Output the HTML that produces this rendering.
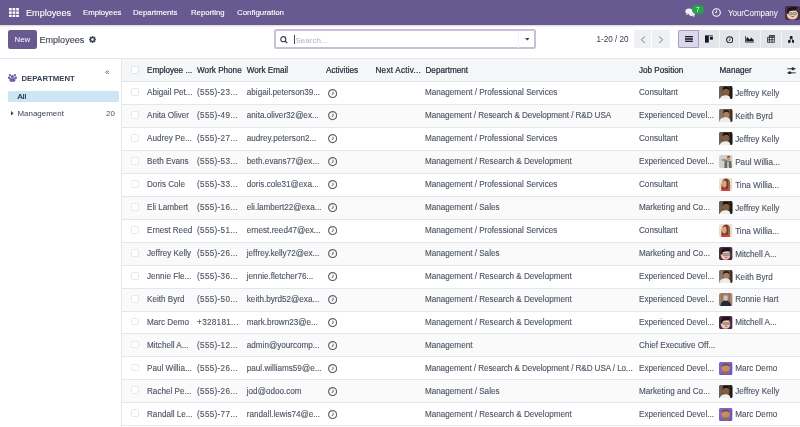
<!DOCTYPE html>
<html><head><meta charset="utf-8"><style>
*{box-sizing:border-box;margin:0;padding:0}
html,body{width:800px;height:427px;overflow:hidden;background:#fff;font-family:"Liberation Sans",sans-serif}
.t{position:absolute;white-space:nowrap}
.rt{-webkit-text-stroke:0.12px #4b5563}
.a{position:absolute}
</style></head><body><div id="wrap" style="position:absolute;left:0;top:0;width:800px;height:427px;overflow:hidden;background:#fff;will-change:transform">
<div class="a" style="left:0;top:0;width:800px;height:25px;background:#675a91"></div><div class="a" style="left:0;top:25px;width:800px;height:2px;background:linear-gradient(rgba(40,40,60,0.2),rgba(40,40,60,0))"></div><svg class="a" style="left:9.2px;top:7.9px" width="10" height="9.4" viewBox="0 0 10 9.4"><g fill="#fff"><rect x="0.0" y="0.0" width="2.7" height="2.5"/><rect x="3.6" y="0.0" width="2.7" height="2.5"/><rect x="7.2" y="0.0" width="2.7" height="2.5"/><rect x="0.0" y="3.4" width="2.7" height="2.5"/><rect x="3.6" y="3.4" width="2.7" height="2.5"/><rect x="7.2" y="3.4" width="2.7" height="2.5"/><rect x="0.0" y="6.8" width="2.7" height="2.5"/><rect x="3.6" y="6.8" width="2.7" height="2.5"/><rect x="7.2" y="6.8" width="2.7" height="2.5"/></g></svg><div class="t " style="left:26px;top:8.90px;font-size:9.1px;line-height:9.1px;color:#fff;font-weight:normal;-webkit-text-stroke:0.1px #fff;">Employees</div>
<div class="t " style="left:83px;top:8.88px;font-size:7.75px;line-height:7.75px;color:#fff;font-weight:normal;-webkit-text-stroke:0.12px #fff;">Employees</div>
<div class="t " style="left:133px;top:8.88px;font-size:7.75px;line-height:7.75px;color:#fff;font-weight:normal;-webkit-text-stroke:0.12px #fff;">Departments</div>
<div class="t " style="left:191px;top:8.88px;font-size:7.75px;line-height:7.75px;color:#fff;font-weight:normal;-webkit-text-stroke:0.12px #fff;">Reporting</div>
<div class="t " style="left:237px;top:8.80px;font-size:7.9px;line-height:7.9px;color:#fff;font-weight:normal;-webkit-text-stroke:0.12px #fff;">Configuration</div>
<svg class="a" style="left:684.8px;top:8px" width="11" height="9.2" viewBox="0 0 11 9.2">
<ellipse cx="7" cy="5.9" rx="3.1" ry="2.1" fill="#e6e3ee"/><path d="M8.6 7.4 L10.2 9 L6.8 7.9Z" fill="#e6e3ee"/>
<ellipse cx="4" cy="3.3" rx="3.6" ry="2.7" fill="#f3f1f7"/><path d="M1.6 5.2 L1 7 L3.6 5.9Z" fill="#f3f1f7"/></svg><div class="a" style="left:691.9px;top:5.3px;width:12px;height:8.8px;border-radius:4.4px;background:#22a447"></div><div class="t " style="left:696px;top:6.65px;font-size:6.4px;line-height:6.4px;color:#fff;font-weight:normal;">7</div>
<svg class="a" style="left:711.5px;top:8.2px" width="9" height="9" viewBox="0 0 9 9"><circle cx="4.5" cy="4.5" r="3.8" fill="none" stroke="#fff" stroke-width="1.1"/><path d="M4.5 2.3V4.6H3" fill="none" stroke="#fff" stroke-width="0.9"/></svg><div class="t " style="left:728px;top:9.98px;font-size:8.15px;line-height:8.15px;color:#fff;font-weight:normal;letter-spacing:-0.15px">YourCompany</div>
<svg class="a" style="left:785.1px;top:5.5px" width="15" height="14" viewBox="0 0 15 14"><rect width="15" height="14" rx="2" fill="#4b2b46"/>
<path d="M1.8 8.5 Q1.8 4.2 7.4 4.1 Q13 4.2 13 8.6 Q12.6 13.6 7.4 13.6 Q2.2 13.6 1.8 8.5Z" fill="#f2cbb2"/>
<path d="M2 7.6 Q1.6 2 5.6 1.2 Q9.5 0.4 12.2 1.4 Q12 3.6 9.8 4.4 Q6.5 4.6 4.2 5.2 L3.4 8Z" fill="#1b1418"/>
<rect x="3.6" y="6.6" width="3.5" height="2.2" rx=".6" fill="#b9bcbc" stroke="#555" stroke-width=".5"/><rect x="7.9" y="6.6" width="3.5" height="2.2" rx=".6" fill="#b9bcbc" stroke="#555" stroke-width=".5"/>
<path d="M6.3 10.6 H8.9" stroke="#6a3a3a" stroke-width=".8"/></svg><div class="a" style="left:0;top:58px;width:800px;height:1px;background:#e5e7eb"></div><div class="a" style="left:8.3px;top:30.3px;width:28.6px;height:18.4px;border-radius:2.3px;background:#675a91"></div><div class="t " style="left:14.5px;top:35.85px;font-size:7.8px;line-height:7.8px;color:#fff;font-weight:normal;">New</div>
<div class="t " style="left:39.5px;top:36.03px;font-size:9.05px;line-height:9.05px;color:#3f4551;font-weight:normal;-webkit-text-stroke:0.12px #3f4551;">Employees</div>
<svg class="a" style="left:88.6px;top:36.1px" width="7" height="7" viewBox="-3.5 -3.5 7 7"><g fill="#374151"><rect x="-0.85" y="-3.4" width="1.7" height="1.6" transform="rotate(0)"/><rect x="-0.85" y="-3.4" width="1.7" height="1.6" transform="rotate(45)"/><rect x="-0.85" y="-3.4" width="1.7" height="1.6" transform="rotate(90)"/><rect x="-0.85" y="-3.4" width="1.7" height="1.6" transform="rotate(135)"/><rect x="-0.85" y="-3.4" width="1.7" height="1.6" transform="rotate(180)"/><rect x="-0.85" y="-3.4" width="1.7" height="1.6" transform="rotate(225)"/><rect x="-0.85" y="-3.4" width="1.7" height="1.6" transform="rotate(270)"/><rect x="-0.85" y="-3.4" width="1.7" height="1.6" transform="rotate(315)"/><path fill-rule="evenodd" d="M0 -2.6A2.6 2.6 0 1 1 0 2.6A2.6 2.6 0 1 1 0 -2.6ZM0 -1.35A1.35 1.35 0 1 0 0 1.35A1.35 1.35 0 1 0 0 -1.35Z"/></g></svg><div class="a" style="left:273.5px;top:29.4px;width:262px;height:20px;border:2px solid #c6c1d8;border-radius:2.5px;background:#fff"></div><div class="a" style="left:518px;top:31px;width:1px;height:17px;background:#f1f2f4"></div><svg class="a" style="left:279.6px;top:36.4px" width="8" height="7.4" viewBox="0 0 8 7.4"><circle cx="3.3" cy="3.2" r="2.55" fill="none" stroke="#374151" stroke-width="1.15"/><path d="M5.1 5 L7.3 7.1" stroke="#374151" stroke-width="1.25"/></svg><div class="a" style="left:294.2px;top:35px;width:0.9px;height:9px;background:#444"></div><div class="t " style="left:295.5px;top:36.95px;font-size:8px;line-height:8px;color:#adb5bd;font-weight:normal;">Search...</div>
<svg class="a" style="left:524.6px;top:38.4px" width="4.6" height="2.5" viewBox="0 0 5 2.6"><path d="M0 0H5L2.5 2.6Z" fill="#374151"/></svg><div class="t " style="left:596.5px;top:35.98px;font-size:8.15px;line-height:8.15px;color:#374151;font-weight:normal;">1-20 / 20</div>
<div class="a" style="left:633.5px;top:30px;width:36px;height:18px;border-radius:2px;background:#eef0f3"></div><div class="a" style="left:651px;top:30px;width:0.7px;height:18px;background:#fff"></div><svg class="a" style="left:639.5px;top:35.8px" width="6" height="7.5" viewBox="0 0 6 7.5"><path d="M5 0.5 L1.2 3.75 L5 7" fill="none" stroke="#6b7280" stroke-width="0.9"/></svg><svg class="a" style="left:657.5px;top:35.8px" width="6" height="7.5" viewBox="0 0 6 7.5"><path d="M1 0.5 L4.8 3.75 L1 7" fill="none" stroke="#6b7280" stroke-width="0.9"/></svg><div class="a" style="left:678.3px;top:30px;width:122px;height:18px;background:#e2e5e9"></div><div class="a" style="left:719.1px;top:30px;width:0.8px;height:18px;background:#f3f4f6"></div><div class="a" style="left:739.2px;top:30px;width:0.8px;height:18px;background:#f3f4f6"></div><div class="a" style="left:760.0px;top:30px;width:0.8px;height:18px;background:#f3f4f6"></div><div class="a" style="left:781.0px;top:30px;width:0.8px;height:18px;background:#f3f4f6"></div><div class="a" style="left:678.3px;top:30px;width:21px;height:18px;border:1px solid #a69dca;border-radius:2px 0 0 2px;background:#dcd8ea"></div><svg class="a" style="left:684.9px;top:35.85px" width="7.9" height="6.2" viewBox="0 0 7.9 6.2"><g fill="#111827"><rect y="0" width="7.9" height="1.1"/><rect y="5.1" width="7.9" height="1.1"/><rect y="1.7" width="7.9" height="2.8" fill="#3f434b"/></g></svg><svg class="a" style="left:705.1px;top:35.1px" width="8" height="7.7" viewBox="0 0 8 7.7"><g fill="#111827"><rect x="0" y="0" width="8" height=".75" fill="#555"/><rect x="0" y=".75" width="3.8" height="6.9"/><rect x="4.9" y="1.65" width="3" height="3"/></g></svg><svg class="a" style="left:725.8px;top:35.5px" width="7.4" height="7.4" viewBox="0 0 8 8"><circle cx="4" cy="4" r="3.3" fill="none" stroke="#111827" stroke-width="1.1"/><path d="M4.3 2.4V4.5 L3 5.3" fill="none" stroke="#111827" stroke-width=".8"/></svg><svg class="a" style="left:745px;top:36px" width="9.4" height="6.5" viewBox="0 0 9.4 6.5"><path d="M0.4 0V6.1H9.3" fill="none" stroke="#111827" stroke-width=".8"/><path d="M1.3 5.2V2.5L2.6 1.1 3.8 2.7 5 3.5 6.2 1.5 7.3 2.7 8.6 3.8V5.2Z" fill="#111827"/></svg><svg class="a" style="left:767px;top:35.1px" width="8.2" height="7.7" viewBox="0 0 8.2 7.7"><g fill="none" stroke="#111827" stroke-width=".75"><path d="M2.4 .4H7.8V7.3H.4V2.4H7.8M.4 4.8H7.8M2.4 .4V7.3M5.1 .4V7.3"/></g><rect x="2.4" y=".4" width="5.4" height="2" fill="#111827" opacity=".45"/></svg><svg class="a" style="left:787.8px;top:35.7px" width="6.6" height="6.9" viewBox="0 0 6.6 6.9"><g fill="#111827"><circle cx="3.2" cy="1.35" r="1.4"/><circle cx="1.3" cy="5.5" r="1.4"/><circle cx="5.3" cy="5.5" r="1.4"/><path d="M3.2 1.25 L1.2 5.6 M3.2 1.25 L5.3 5.6" stroke="#111827" stroke-width=".8"/></g></svg><div class="a" style="left:121px;top:58.5px;width:1px;height:369px;background:#e5e7eb"></div><svg class="a" style="left:7px;top:73px" width="11" height="10" viewBox="0 0 11 10"><g fill="#6b5ca5"><circle cx="2.95" cy="2.1" r="1.15"/><circle cx="7.9" cy="2.1" r="1.15"/><circle cx="5.45" cy="3.6" r="1.55"/><rect x="1" y="3.5" width="2.4" height="2.5" rx=".9"/><rect x="7.5" y="3.5" width="2.4" height="2.5" rx=".9"/><rect x="2.5" y="5.3" width="5.9" height="3.4" rx="1.1"/></g></svg><div class="t " style="left:21.5px;top:75.17px;font-size:7.75px;line-height:7.75px;color:#374151;font-weight:bold;">DEPARTMENT</div>
<svg class="a" style="left:104.8px;top:69.6px" width="4.6" height="4.6" viewBox="0 0 4.6 4.6"><path d="M2.4 .5L.6 2.3 2.4 4.1M4.3 .5L2.5 2.3 4.3 4.1" fill="none" stroke="#6b7280" stroke-width=".95"/></svg><div class="a" style="left:8.1px;top:90.5px;width:110.9px;height:11.7px;border-radius:1.5px;background:#cce6f5"></div><div class="t " style="left:17.5px;top:93.40px;font-size:7.9px;line-height:7.9px;color:#111827;font-weight:normal;-webkit-text-stroke:0.18px #111827;">All</div>
<svg class="a" style="left:11.2px;top:111.2px" width="2.6" height="4.4" viewBox="0 0 2.6 4.4"><path d="M0 0L2.6 2.2 0 4.4Z" fill="#374151"/></svg><div class="t " style="left:17.5px;top:109.98px;font-size:7.95px;line-height:7.95px;color:#374151;font-weight:normal;">Management</div>
<div class="t " style="left:106px;top:109.98px;font-size:7.95px;line-height:7.95px;color:#4b5563;font-weight:normal;">20</div>
<div class="a" style="left:122px;top:58.5px;width:678px;height:23.0px;background:#f5f6f8"></div><div class="a" style="left:122px;top:81.0px;width:678px;height:1px;background:#e3e5e8"></div><div class="a" style="left:130.9px;top:66px;width:7.9px;height:7.9px;border:1px solid #e2e4e8;border-radius:1.6px;background:#fff"></div><div class="t " style="left:147px;top:66.97px;font-size:8.15px;line-height:8.15px;color:#1f2937;font-weight:normal;-webkit-text-stroke:0.22px #1f2937;">Employee ...</div>
<div class="t " style="left:197.1px;top:66.97px;font-size:8.15px;line-height:8.15px;color:#1f2937;font-weight:normal;-webkit-text-stroke:0.22px #1f2937;">Work Phone</div>
<div class="t " style="left:246.8px;top:66.97px;font-size:8.15px;line-height:8.15px;color:#1f2937;font-weight:normal;-webkit-text-stroke:0.22px #1f2937;">Work Email</div>
<div class="t " style="left:326px;top:66.97px;font-size:8.15px;line-height:8.15px;color:#1f2937;font-weight:normal;-webkit-text-stroke:0.22px #1f2937;">Activities</div>
<div class="t " style="left:375.5px;top:66.97px;font-size:8.15px;line-height:8.15px;color:#1f2937;font-weight:normal;-webkit-text-stroke:0.22px #1f2937;letter-spacing:0.25px">Next Activ...</div>
<div class="t " style="left:425.5px;top:66.97px;font-size:8.15px;line-height:8.15px;color:#1f2937;font-weight:normal;-webkit-text-stroke:0.22px #1f2937;">Department</div>
<div class="t " style="left:639px;top:66.97px;font-size:8.15px;line-height:8.15px;color:#1f2937;font-weight:normal;-webkit-text-stroke:0.22px #1f2937;">Job Position</div>
<div class="t " style="left:719.6px;top:66.97px;font-size:8.15px;line-height:8.15px;color:#1f2937;font-weight:normal;-webkit-text-stroke:0.22px #1f2937;">Manager</div>
<svg class="a" style="left:787px;top:66.5px" width="9" height="7.6" viewBox="0 0 9 7.6"><g fill="#1f2937"><rect x="0.3" y="1.35" width="8.4" height=".9"/><rect x="0.3" y="5.4" width="8.4" height=".9"/><circle cx="5.9" cy="1.8" r="1.5"/><circle cx="2.8" cy="5.85" r="1.5"/></g></svg><div class="a" style="left:122px;top:104.45px;width:678px;height:22.95px;background:#fafafa"></div><div class="a" style="left:122px;top:150.35px;width:678px;height:22.95px;background:#fafafa"></div><div class="a" style="left:122px;top:196.25px;width:678px;height:22.95px;background:#fafafa"></div><div class="a" style="left:122px;top:242.15px;width:678px;height:22.95px;background:#fafafa"></div><div class="a" style="left:122px;top:288.05px;width:678px;height:22.95px;background:#fafafa"></div><div class="a" style="left:122px;top:333.95px;width:678px;height:22.95px;background:#fafafa"></div><div class="a" style="left:122px;top:379.85px;width:678px;height:22.95px;background:#fafafa"></div><div class="a" style="left:122px;top:103.95px;width:678px;height:1px;background:#e4e6e9"></div><div class="a" style="left:122px;top:126.90px;width:678px;height:1px;background:#e4e6e9"></div><div class="a" style="left:122px;top:149.85px;width:678px;height:1px;background:#e4e6e9"></div><div class="a" style="left:122px;top:172.80px;width:678px;height:1px;background:#e4e6e9"></div><div class="a" style="left:122px;top:195.75px;width:678px;height:1px;background:#e4e6e9"></div><div class="a" style="left:122px;top:218.70px;width:678px;height:1px;background:#e4e6e9"></div><div class="a" style="left:122px;top:241.65px;width:678px;height:1px;background:#e4e6e9"></div><div class="a" style="left:122px;top:264.60px;width:678px;height:1px;background:#e4e6e9"></div><div class="a" style="left:122px;top:287.55px;width:678px;height:1px;background:#e4e6e9"></div><div class="a" style="left:122px;top:310.50px;width:678px;height:1px;background:#e4e6e9"></div><div class="a" style="left:122px;top:333.45px;width:678px;height:1px;background:#e4e6e9"></div><div class="a" style="left:122px;top:356.40px;width:678px;height:1px;background:#e4e6e9"></div><div class="a" style="left:122px;top:379.35px;width:678px;height:1px;background:#e4e6e9"></div><div class="a" style="left:122px;top:402.30px;width:678px;height:1px;background:#e4e6e9"></div><div class="a" style="left:122px;top:425.25px;width:678px;height:1px;background:#e4e6e9"></div><div class="a" style="left:130.9px;top:88.10px;width:7.9px;height:7.9px;border:1px solid #e6e8eb;border-radius:1.6px;background:#fff"></div><div class="t rt" style="left:147px;top:88.97px;font-size:8.15px;line-height:8.15px;color:#4b5563;font-weight:normal;">Abigail Pet...</div>
<div class="t rt" style="left:197.1px;top:88.97px;font-size:8.15px;line-height:8.15px;color:#4b5563;font-weight:normal;letter-spacing:0.3px">(555)-23...</div>
<div class="t rt" style="left:246.8px;top:88.97px;font-size:8.15px;line-height:8.15px;color:#4b5563;font-weight:normal;">abigail.peterson39...</div>
<svg class="a" style="left:328px;top:88.50px" width="9.2" height="9.2" viewBox="0 0 9.2 9.2"><circle cx="4.6" cy="4.6" r="4" fill="none" stroke="#5f6670" stroke-width="1.2"/><path d="M5.1 2.7V5.1 L3.7 5.8" fill="none" stroke="#5f6670" stroke-width=".95"/></svg><div class="t rt" style="left:425px;top:88.97px;font-size:8.15px;line-height:8.15px;color:#4b5563;font-weight:normal;">Management / Professional Services</div>
<div class="t rt" style="left:639px;top:88.97px;font-size:8.15px;line-height:8.15px;color:#4b5563;font-weight:normal;">Consultant</div>
<svg class="a" style="left:719.3px;top:86.30px" width="13.6" height="13.2" viewBox="0 0 14 14" preserveAspectRatio="none"><clipPath id="c0"><rect width="14" height="14" rx="2.3"/></clipPath><g clip-path="url(#c0)"><rect width="14" height="14" fill="#463c33"/><rect x="0" y="0" width="4" height="14" fill="#6d5f52"/><rect x="11" y="0" width="3" height="14" fill="#1f1b17"/><ellipse cx="7.2" cy="6.6" rx="3.3" ry="3.6" fill="#8a5a3a"/><path d="M3.6 4.6 Q3.6 .6 7.2 .7 Q10.8 .6 10.8 4.4 Q9 2.8 7 3 Q5 2.8 3.6 4.6Z" fill="#15110e"/><path d="M.8 14 Q1.5 9.6 7 9.7 Q11.6 9.6 11.8 14Z" fill="#eeeeea"/></g></svg><div class="t rt" style="left:735.2px;top:89.67px;font-size:8.15px;line-height:8.15px;color:#4b5563;font-weight:normal;">Jeffrey Kelly</div>
<div class="a" style="left:130.9px;top:111.05px;width:7.9px;height:7.9px;border:1px solid #e6e8eb;border-radius:1.6px;background:#fff"></div><div class="t rt" style="left:147px;top:111.95px;font-size:8.15px;line-height:8.15px;color:#4b5563;font-weight:normal;">Anita Oliver</div>
<div class="t rt" style="left:197.1px;top:111.95px;font-size:8.15px;line-height:8.15px;color:#4b5563;font-weight:normal;letter-spacing:0.3px">(555)-49...</div>
<div class="t rt" style="left:246.8px;top:111.95px;font-size:8.15px;line-height:8.15px;color:#4b5563;font-weight:normal;">anita.oliver32@ex...</div>
<svg class="a" style="left:328px;top:111.45px" width="9.2" height="9.2" viewBox="0 0 9.2 9.2"><circle cx="4.6" cy="4.6" r="4" fill="none" stroke="#5f6670" stroke-width="1.2"/><path d="M5.1 2.7V5.1 L3.7 5.8" fill="none" stroke="#5f6670" stroke-width=".95"/></svg><div class="t rt" style="left:425px;top:111.95px;font-size:8.15px;line-height:8.15px;color:#4b5563;font-weight:normal;letter-spacing:-0.08px">Management / Research &amp; Development / R&amp;D USA</div>
<div class="t rt" style="left:639px;top:111.95px;font-size:8.15px;line-height:8.15px;color:#4b5563;font-weight:normal;">Experienced Devel...</div>
<svg class="a" style="left:719.3px;top:109.25px" width="13.6" height="13.2" viewBox="0 0 14 14" preserveAspectRatio="none"><clipPath id="c1"><rect width="14" height="14" rx="2.3"/></clipPath><g clip-path="url(#c1)"><rect width="14" height="14" fill="#6a5a4c"/><rect x="0" y="0" width="4" height="14" fill="#86786a"/><rect x="11.5" y="0" width="2.5" height="14" fill="#3a3028"/><ellipse cx="7.5" cy="6.3" rx="2.9" ry="3.4" fill="#b27c5c"/><path d="M4.4 4.6 Q4.4 .9 7.6 1 Q10.8 .9 10.7 4.5 Q9.4 2.9 7.5 3 Q5.6 2.9 4.4 4.6Z" fill="#201914"/><path d="M0 14 Q.6 9 7 8.8 Q11.8 9 12 14Z" fill="#ececea"/></g></svg><div class="t rt" style="left:735.2px;top:112.66px;font-size:8.15px;line-height:8.15px;color:#4b5563;font-weight:normal;">Keith Byrd</div>
<div class="a" style="left:130.9px;top:134.00px;width:7.9px;height:7.9px;border:1px solid #e6e8eb;border-radius:1.6px;background:#fff"></div><div class="t rt" style="left:147px;top:134.94px;font-size:8.15px;line-height:8.15px;color:#4b5563;font-weight:normal;">Audrey Pe...</div>
<div class="t rt" style="left:197.1px;top:134.94px;font-size:8.15px;line-height:8.15px;color:#4b5563;font-weight:normal;letter-spacing:0.3px">(555)-27...</div>
<div class="t rt" style="left:246.8px;top:134.94px;font-size:8.15px;line-height:8.15px;color:#4b5563;font-weight:normal;">audrey.peterson2...</div>
<svg class="a" style="left:328px;top:134.40px" width="9.2" height="9.2" viewBox="0 0 9.2 9.2"><circle cx="4.6" cy="4.6" r="4" fill="none" stroke="#5f6670" stroke-width="1.2"/><path d="M5.1 2.7V5.1 L3.7 5.8" fill="none" stroke="#5f6670" stroke-width=".95"/></svg><div class="t rt" style="left:425px;top:134.94px;font-size:8.15px;line-height:8.15px;color:#4b5563;font-weight:normal;">Management / Professional Services</div>
<div class="t rt" style="left:639px;top:134.94px;font-size:8.15px;line-height:8.15px;color:#4b5563;font-weight:normal;">Consultant</div>
<svg class="a" style="left:719.3px;top:132.20px" width="13.6" height="13.2" viewBox="0 0 14 14" preserveAspectRatio="none"><clipPath id="c2"><rect width="14" height="14" rx="2.3"/></clipPath><g clip-path="url(#c2)"><rect width="14" height="14" fill="#463c33"/><rect x="0" y="0" width="4" height="14" fill="#6d5f52"/><rect x="11" y="0" width="3" height="14" fill="#1f1b17"/><ellipse cx="7.2" cy="6.6" rx="3.3" ry="3.6" fill="#8a5a3a"/><path d="M3.6 4.6 Q3.6 .6 7.2 .7 Q10.8 .6 10.8 4.4 Q9 2.8 7 3 Q5 2.8 3.6 4.6Z" fill="#15110e"/><path d="M.8 14 Q1.5 9.6 7 9.7 Q11.6 9.6 11.8 14Z" fill="#eeeeea"/></g></svg><div class="t rt" style="left:735.2px;top:135.63px;font-size:8.15px;line-height:8.15px;color:#4b5563;font-weight:normal;">Jeffrey Kelly</div>
<div class="a" style="left:130.9px;top:156.95px;width:7.9px;height:7.9px;border:1px solid #e6e8eb;border-radius:1.6px;background:#fff"></div><div class="t rt" style="left:147px;top:157.91px;font-size:8.15px;line-height:8.15px;color:#4b5563;font-weight:normal;">Beth Evans</div>
<div class="t rt" style="left:197.1px;top:157.91px;font-size:8.15px;line-height:8.15px;color:#4b5563;font-weight:normal;letter-spacing:0.3px">(555)-53...</div>
<div class="t rt" style="left:246.8px;top:157.91px;font-size:8.15px;line-height:8.15px;color:#4b5563;font-weight:normal;">beth.evans77@ex...</div>
<svg class="a" style="left:328px;top:157.35px" width="9.2" height="9.2" viewBox="0 0 9.2 9.2"><circle cx="4.6" cy="4.6" r="4" fill="none" stroke="#5f6670" stroke-width="1.2"/><path d="M5.1 2.7V5.1 L3.7 5.8" fill="none" stroke="#5f6670" stroke-width=".95"/></svg><div class="t rt" style="left:425px;top:157.91px;font-size:8.15px;line-height:8.15px;color:#4b5563;font-weight:normal;">Management / Research &amp; Development</div>
<div class="t rt" style="left:639px;top:157.91px;font-size:8.15px;line-height:8.15px;color:#4b5563;font-weight:normal;">Experienced Devel...</div>
<svg class="a" style="left:719.3px;top:155.15px" width="13.6" height="13.2" viewBox="0 0 14 14" preserveAspectRatio="none"><clipPath id="c3"><rect width="14" height="14" rx="2.3"/></clipPath><g clip-path="url(#c3)"><rect width="14" height="14" fill="#d0d0cf"/><path d="M2.8 4.4 Q5 3.8 8 4.8 L8.2 6.6 Q5 6.3 3 6Z" fill="#a88a6a"/><path d="M5.5 14 L5.8 6.2 Q9 5.2 12.6 6.4 L13.2 14Z" fill="#6e695e"/><path d="M8.4 7 L10.2 7 L10.4 14 L8.6 14Z" fill="#e6e6e2"/><path d="M8.9 8 H10 M8.9 10 H10.1 M8.9 12 H10.2" stroke="#444" stroke-width=".7"/><ellipse cx="9.8" cy="3.4" rx="1.8" ry="2.2" fill="#c49373"/><path d="M8 2.6 Q8.4 .9 9.9 .9 Q11.5 .9 11.6 2.6 Q10 1.8 8 2.6Z" fill="#5e4028"/></g></svg><div class="t rt" style="left:735.2px;top:158.61px;font-size:8.15px;line-height:8.15px;color:#4b5563;font-weight:normal;">Paul Willia...</div>
<div class="a" style="left:130.9px;top:179.90px;width:7.9px;height:7.9px;border:1px solid #e6e8eb;border-radius:1.6px;background:#fff"></div><div class="t rt" style="left:147px;top:180.89px;font-size:8.15px;line-height:8.15px;color:#4b5563;font-weight:normal;">Doris Cole</div>
<div class="t rt" style="left:197.1px;top:180.89px;font-size:8.15px;line-height:8.15px;color:#4b5563;font-weight:normal;letter-spacing:0.3px">(555)-33...</div>
<div class="t rt" style="left:246.8px;top:180.89px;font-size:8.15px;line-height:8.15px;color:#4b5563;font-weight:normal;">doris.cole31@exa...</div>
<svg class="a" style="left:328px;top:180.30px" width="9.2" height="9.2" viewBox="0 0 9.2 9.2"><circle cx="4.6" cy="4.6" r="4" fill="none" stroke="#5f6670" stroke-width="1.2"/><path d="M5.1 2.7V5.1 L3.7 5.8" fill="none" stroke="#5f6670" stroke-width=".95"/></svg><div class="t rt" style="left:425px;top:180.89px;font-size:8.15px;line-height:8.15px;color:#4b5563;font-weight:normal;">Management / Professional Services</div>
<div class="t rt" style="left:639px;top:180.89px;font-size:8.15px;line-height:8.15px;color:#4b5563;font-weight:normal;">Consultant</div>
<svg class="a" style="left:719.3px;top:178.10px" width="13.6" height="13.2" viewBox="0 0 14 14" preserveAspectRatio="none"><clipPath id="c4"><rect width="14" height="14" rx="2.3"/></clipPath><g clip-path="url(#c4)"><rect width="14" height="14" fill="#eedfc8"/><path d="M2.6 14 Q1.8 4 5 1.2 Q8.5 -.4 10.6 2.4 Q12 5 11.2 14Z" fill="#6e3e2c"/><path d="M9 2 Q11.6 4.5 11 14 L9.4 14 Q10.2 6 9 2Z" fill="#a87a5c"/><path d="M2.9 6.5 Q3 2.6 5.6 2.6 Q8 2.8 7.8 6.8 Q7.6 10 5.5 10.2 Q3 10 2.9 6.5Z" fill="#d9a17f"/><path d="M2.8 14 Q3 11.2 6.5 11.2 Q10 11.2 10.6 14Z" fill="#e6383b"/></g></svg><div class="t rt" style="left:735.2px;top:181.59px;font-size:8.15px;line-height:8.15px;color:#4b5563;font-weight:normal;">Tina Willia...</div>
<div class="a" style="left:130.9px;top:202.85px;width:7.9px;height:7.9px;border:1px solid #e6e8eb;border-radius:1.6px;background:#fff"></div><div class="t rt" style="left:147px;top:203.88px;font-size:8.15px;line-height:8.15px;color:#4b5563;font-weight:normal;">Eli Lambert</div>
<div class="t rt" style="left:197.1px;top:203.88px;font-size:8.15px;line-height:8.15px;color:#4b5563;font-weight:normal;letter-spacing:0.3px">(555)-16...</div>
<div class="t rt" style="left:246.8px;top:203.88px;font-size:8.15px;line-height:8.15px;color:#4b5563;font-weight:normal;">eli.lambert22@exa...</div>
<svg class="a" style="left:328px;top:203.25px" width="9.2" height="9.2" viewBox="0 0 9.2 9.2"><circle cx="4.6" cy="4.6" r="4" fill="none" stroke="#5f6670" stroke-width="1.2"/><path d="M5.1 2.7V5.1 L3.7 5.8" fill="none" stroke="#5f6670" stroke-width=".95"/></svg><div class="t rt" style="left:425px;top:203.88px;font-size:8.15px;line-height:8.15px;color:#4b5563;font-weight:normal;">Management / Sales</div>
<div class="t rt" style="left:639px;top:203.88px;font-size:8.15px;line-height:8.15px;color:#4b5563;font-weight:normal;">Marketing and Co...</div>
<svg class="a" style="left:719.3px;top:201.05px" width="13.6" height="13.2" viewBox="0 0 14 14" preserveAspectRatio="none"><clipPath id="c5"><rect width="14" height="14" rx="2.3"/></clipPath><g clip-path="url(#c5)"><rect width="14" height="14" fill="#463c33"/><rect x="0" y="0" width="4" height="14" fill="#6d5f52"/><rect x="11" y="0" width="3" height="14" fill="#1f1b17"/><ellipse cx="7.2" cy="6.6" rx="3.3" ry="3.6" fill="#8a5a3a"/><path d="M3.6 4.6 Q3.6 .6 7.2 .7 Q10.8 .6 10.8 4.4 Q9 2.8 7 3 Q5 2.8 3.6 4.6Z" fill="#15110e"/><path d="M.8 14 Q1.5 9.6 7 9.7 Q11.6 9.6 11.8 14Z" fill="#eeeeea"/></g></svg><div class="t rt" style="left:735.2px;top:204.57px;font-size:8.15px;line-height:8.15px;color:#4b5563;font-weight:normal;">Jeffrey Kelly</div>
<div class="a" style="left:130.9px;top:225.80px;width:7.9px;height:7.9px;border:1px solid #e6e8eb;border-radius:1.6px;background:#fff"></div><div class="t rt" style="left:147px;top:226.85px;font-size:8.15px;line-height:8.15px;color:#4b5563;font-weight:normal;">Ernest Reed</div>
<div class="t rt" style="left:197.1px;top:226.85px;font-size:8.15px;line-height:8.15px;color:#4b5563;font-weight:normal;letter-spacing:0.3px">(555)-51...</div>
<div class="t rt" style="left:246.8px;top:226.85px;font-size:8.15px;line-height:8.15px;color:#4b5563;font-weight:normal;">ernest.reed47@ex...</div>
<svg class="a" style="left:328px;top:226.20px" width="9.2" height="9.2" viewBox="0 0 9.2 9.2"><circle cx="4.6" cy="4.6" r="4" fill="none" stroke="#5f6670" stroke-width="1.2"/><path d="M5.1 2.7V5.1 L3.7 5.8" fill="none" stroke="#5f6670" stroke-width=".95"/></svg><div class="t rt" style="left:425px;top:226.85px;font-size:8.15px;line-height:8.15px;color:#4b5563;font-weight:normal;">Management / Professional Services</div>
<div class="t rt" style="left:639px;top:226.85px;font-size:8.15px;line-height:8.15px;color:#4b5563;font-weight:normal;">Consultant</div>
<svg class="a" style="left:719.3px;top:224.00px" width="13.6" height="13.2" viewBox="0 0 14 14" preserveAspectRatio="none"><clipPath id="c6"><rect width="14" height="14" rx="2.3"/></clipPath><g clip-path="url(#c6)"><rect width="14" height="14" fill="#eedfc8"/><path d="M2.6 14 Q1.8 4 5 1.2 Q8.5 -.4 10.6 2.4 Q12 5 11.2 14Z" fill="#6e3e2c"/><path d="M9 2 Q11.6 4.5 11 14 L9.4 14 Q10.2 6 9 2Z" fill="#a87a5c"/><path d="M2.9 6.5 Q3 2.6 5.6 2.6 Q8 2.8 7.8 6.8 Q7.6 10 5.5 10.2 Q3 10 2.9 6.5Z" fill="#d9a17f"/><path d="M2.8 14 Q3 11.2 6.5 11.2 Q10 11.2 10.6 14Z" fill="#e6383b"/></g></svg><div class="t rt" style="left:735.2px;top:227.55px;font-size:8.15px;line-height:8.15px;color:#4b5563;font-weight:normal;">Tina Willia...</div>
<div class="a" style="left:130.9px;top:248.75px;width:7.9px;height:7.9px;border:1px solid #e6e8eb;border-radius:1.6px;background:#fff"></div><div class="t rt" style="left:147px;top:249.84px;font-size:8.15px;line-height:8.15px;color:#4b5563;font-weight:normal;">Jeffrey Kelly</div>
<div class="t rt" style="left:197.1px;top:249.84px;font-size:8.15px;line-height:8.15px;color:#4b5563;font-weight:normal;letter-spacing:0.3px">(555)-26...</div>
<div class="t rt" style="left:246.8px;top:249.84px;font-size:8.15px;line-height:8.15px;color:#4b5563;font-weight:normal;">jeffrey.kelly72@ex...</div>
<svg class="a" style="left:328px;top:249.15px" width="9.2" height="9.2" viewBox="0 0 9.2 9.2"><circle cx="4.6" cy="4.6" r="4" fill="none" stroke="#5f6670" stroke-width="1.2"/><path d="M5.1 2.7V5.1 L3.7 5.8" fill="none" stroke="#5f6670" stroke-width=".95"/></svg><div class="t rt" style="left:425px;top:249.84px;font-size:8.15px;line-height:8.15px;color:#4b5563;font-weight:normal;">Management / Sales</div>
<div class="t rt" style="left:639px;top:249.84px;font-size:8.15px;line-height:8.15px;color:#4b5563;font-weight:normal;">Marketing and Co...</div>
<svg class="a" style="left:719.3px;top:246.95px" width="13.6" height="13.2" viewBox="0 0 14 14" preserveAspectRatio="none"><clipPath id="c7"><rect width="14" height="14" rx="2.3"/></clipPath><g clip-path="url(#c7)"><rect width="14" height="14" fill="#4c2a46"/><path d="M1.8 8.6 Q1.8 4.2 6.8 4.1 Q11.6 4.2 11.6 8.6 Q11.3 13.6 6.8 13.6 Q2.2 13.6 1.8 8.6Z" fill="#f2cbb0"/><path d="M2 7.8 Q1.6 2 5.3 1.4 Q9 .7 11.8 1.6 Q11.6 3.8 9.4 4.5 Q6.4 4.7 4 5.3 L3.2 8.2Z" fill="#1a1318"/><rect x="4.4" y="6.9" width="3" height="2.3" rx=".6" fill="#b7bab8" stroke="#4a4a4a" stroke-width=".5"/><rect x="7.9" y="6.9" width="3" height="2.3" rx=".6" fill="#b7bab8" stroke="#4a4a4a" stroke-width=".5"/><path d="M6.2 11 H8.6" stroke="#7a4a4a" stroke-width=".8"/></g></svg><div class="t rt" style="left:735.2px;top:250.54px;font-size:8.15px;line-height:8.15px;color:#4b5563;font-weight:normal;">Mitchell A...</div>
<div class="a" style="left:130.9px;top:271.70px;width:7.9px;height:7.9px;border:1px solid #e6e8eb;border-radius:1.6px;background:#fff"></div><div class="t rt" style="left:147px;top:272.81px;font-size:8.15px;line-height:8.15px;color:#4b5563;font-weight:normal;">Jennie Fle...</div>
<div class="t rt" style="left:197.1px;top:272.81px;font-size:8.15px;line-height:8.15px;color:#4b5563;font-weight:normal;letter-spacing:0.3px">(555)-36...</div>
<div class="t rt" style="left:246.8px;top:272.81px;font-size:8.15px;line-height:8.15px;color:#4b5563;font-weight:normal;">jennie.fletcher76...</div>
<svg class="a" style="left:328px;top:272.10px" width="9.2" height="9.2" viewBox="0 0 9.2 9.2"><circle cx="4.6" cy="4.6" r="4" fill="none" stroke="#5f6670" stroke-width="1.2"/><path d="M5.1 2.7V5.1 L3.7 5.8" fill="none" stroke="#5f6670" stroke-width=".95"/></svg><div class="t rt" style="left:425px;top:272.81px;font-size:8.15px;line-height:8.15px;color:#4b5563;font-weight:normal;">Management / Research &amp; Development</div>
<div class="t rt" style="left:639px;top:272.81px;font-size:8.15px;line-height:8.15px;color:#4b5563;font-weight:normal;">Experienced Devel...</div>
<svg class="a" style="left:719.3px;top:269.90px" width="13.6" height="13.2" viewBox="0 0 14 14" preserveAspectRatio="none"><clipPath id="c8"><rect width="14" height="14" rx="2.3"/></clipPath><g clip-path="url(#c8)"><rect width="14" height="14" fill="#6a5a4c"/><rect x="0" y="0" width="4" height="14" fill="#86786a"/><rect x="11.5" y="0" width="2.5" height="14" fill="#3a3028"/><ellipse cx="7.5" cy="6.3" rx="2.9" ry="3.4" fill="#b27c5c"/><path d="M4.4 4.6 Q4.4 .9 7.6 1 Q10.8 .9 10.7 4.5 Q9.4 2.9 7.5 3 Q5.6 2.9 4.4 4.6Z" fill="#201914"/><path d="M0 14 Q.6 9 7 8.8 Q11.8 9 12 14Z" fill="#ececea"/></g></svg><div class="t rt" style="left:735.2px;top:273.51px;font-size:8.15px;line-height:8.15px;color:#4b5563;font-weight:normal;">Keith Byrd</div>
<div class="a" style="left:130.9px;top:294.65px;width:7.9px;height:7.9px;border:1px solid #e6e8eb;border-radius:1.6px;background:#fff"></div><div class="t rt" style="left:147px;top:295.79px;font-size:8.15px;line-height:8.15px;color:#4b5563;font-weight:normal;">Keith Byrd</div>
<div class="t rt" style="left:197.1px;top:295.79px;font-size:8.15px;line-height:8.15px;color:#4b5563;font-weight:normal;letter-spacing:0.3px">(555)-50...</div>
<div class="t rt" style="left:246.8px;top:295.79px;font-size:8.15px;line-height:8.15px;color:#4b5563;font-weight:normal;">keith.byrd52@exa...</div>
<svg class="a" style="left:328px;top:295.05px" width="9.2" height="9.2" viewBox="0 0 9.2 9.2"><circle cx="4.6" cy="4.6" r="4" fill="none" stroke="#5f6670" stroke-width="1.2"/><path d="M5.1 2.7V5.1 L3.7 5.8" fill="none" stroke="#5f6670" stroke-width=".95"/></svg><div class="t rt" style="left:425px;top:295.79px;font-size:8.15px;line-height:8.15px;color:#4b5563;font-weight:normal;">Management / Research &amp; Development</div>
<div class="t rt" style="left:639px;top:295.79px;font-size:8.15px;line-height:8.15px;color:#4b5563;font-weight:normal;">Experienced Devel...</div>
<svg class="a" style="left:719.3px;top:292.85px" width="13.6" height="13.2" viewBox="0 0 14 14" preserveAspectRatio="none"><clipPath id="c9"><rect width="14" height="14" rx="2.3"/></clipPath><g clip-path="url(#c9)"><rect width="14" height="14" fill="#a58570"/><path d="M3 0V14M6.5 0V14M10.5 0V14" stroke="#8a6a56" stroke-width="1"/><ellipse cx="6.8" cy="5.4" rx="2.2" ry="2.9" fill="#d6c0b2"/><path d="M1.4 14 Q1.8 8.4 6.8 8.3 Q12 8.4 12.8 14Z" fill="#1f2a3e"/></g></svg><div class="t rt" style="left:735.2px;top:296.49px;font-size:8.15px;line-height:8.15px;color:#4b5563;font-weight:normal;">Ronnie Hart</div>
<div class="a" style="left:130.9px;top:317.60px;width:7.9px;height:7.9px;border:1px solid #e6e8eb;border-radius:1.6px;background:#fff"></div><div class="t rt" style="left:147px;top:318.77px;font-size:8.15px;line-height:8.15px;color:#4b5563;font-weight:normal;">Marc Demo</div>
<div class="t rt" style="left:197.1px;top:318.77px;font-size:8.15px;line-height:8.15px;color:#4b5563;font-weight:normal;letter-spacing:0.3px">+328181...</div>
<div class="t rt" style="left:246.8px;top:318.77px;font-size:8.15px;line-height:8.15px;color:#4b5563;font-weight:normal;">mark.brown23@e...</div>
<svg class="a" style="left:328px;top:318.00px" width="9.2" height="9.2" viewBox="0 0 9.2 9.2"><circle cx="4.6" cy="4.6" r="4" fill="none" stroke="#5f6670" stroke-width="1.2"/><path d="M5.1 2.7V5.1 L3.7 5.8" fill="none" stroke="#5f6670" stroke-width=".95"/></svg><div class="t rt" style="left:425px;top:318.77px;font-size:8.15px;line-height:8.15px;color:#4b5563;font-weight:normal;">Management / Research &amp; Development</div>
<div class="t rt" style="left:639px;top:318.77px;font-size:8.15px;line-height:8.15px;color:#4b5563;font-weight:normal;">Experienced Devel...</div>
<svg class="a" style="left:719.3px;top:315.80px" width="13.6" height="13.2" viewBox="0 0 14 14" preserveAspectRatio="none"><clipPath id="c10"><rect width="14" height="14" rx="2.3"/></clipPath><g clip-path="url(#c10)"><rect width="14" height="14" fill="#4c2a46"/><path d="M1.8 8.6 Q1.8 4.2 6.8 4.1 Q11.6 4.2 11.6 8.6 Q11.3 13.6 6.8 13.6 Q2.2 13.6 1.8 8.6Z" fill="#f2cbb0"/><path d="M2 7.8 Q1.6 2 5.3 1.4 Q9 .7 11.8 1.6 Q11.6 3.8 9.4 4.5 Q6.4 4.7 4 5.3 L3.2 8.2Z" fill="#1a1318"/><rect x="4.4" y="6.9" width="3" height="2.3" rx=".6" fill="#b7bab8" stroke="#4a4a4a" stroke-width=".5"/><rect x="7.9" y="6.9" width="3" height="2.3" rx=".6" fill="#b7bab8" stroke="#4a4a4a" stroke-width=".5"/><path d="M6.2 11 H8.6" stroke="#7a4a4a" stroke-width=".8"/></g></svg><div class="t rt" style="left:735.2px;top:319.47px;font-size:8.15px;line-height:8.15px;color:#4b5563;font-weight:normal;">Mitchell A...</div>
<div class="a" style="left:130.9px;top:340.55px;width:7.9px;height:7.9px;border:1px solid #e6e8eb;border-radius:1.6px;background:#fff"></div><div class="t rt" style="left:147px;top:341.75px;font-size:8.15px;line-height:8.15px;color:#4b5563;font-weight:normal;">Mitchell A...</div>
<div class="t rt" style="left:197.1px;top:341.75px;font-size:8.15px;line-height:8.15px;color:#4b5563;font-weight:normal;letter-spacing:0.3px">(555)-12...</div>
<div class="t rt" style="left:246.8px;top:341.75px;font-size:8.15px;line-height:8.15px;color:#4b5563;font-weight:normal;">admin@yourcomp...</div>
<svg class="a" style="left:328px;top:340.95px" width="9.2" height="9.2" viewBox="0 0 9.2 9.2"><circle cx="4.6" cy="4.6" r="4" fill="none" stroke="#5f6670" stroke-width="1.2"/><path d="M5.1 2.7V5.1 L3.7 5.8" fill="none" stroke="#5f6670" stroke-width=".95"/></svg><div class="t rt" style="left:425px;top:341.75px;font-size:8.15px;line-height:8.15px;color:#4b5563;font-weight:normal;">Management</div>
<div class="t rt" style="left:639px;top:341.75px;font-size:8.15px;line-height:8.15px;color:#4b5563;font-weight:normal;">Chief Executive Off...</div>
<div class="a" style="left:130.9px;top:363.50px;width:7.9px;height:7.9px;border:1px solid #e6e8eb;border-radius:1.6px;background:#fff"></div><div class="t rt" style="left:147px;top:364.74px;font-size:8.15px;line-height:8.15px;color:#4b5563;font-weight:normal;">Paul Willia...</div>
<div class="t rt" style="left:197.1px;top:364.74px;font-size:8.15px;line-height:8.15px;color:#4b5563;font-weight:normal;letter-spacing:0.3px">(555)-26...</div>
<div class="t rt" style="left:246.8px;top:364.74px;font-size:8.15px;line-height:8.15px;color:#4b5563;font-weight:normal;">paul.williams59@e...</div>
<svg class="a" style="left:328px;top:363.90px" width="9.2" height="9.2" viewBox="0 0 9.2 9.2"><circle cx="4.6" cy="4.6" r="4" fill="none" stroke="#5f6670" stroke-width="1.2"/><path d="M5.1 2.7V5.1 L3.7 5.8" fill="none" stroke="#5f6670" stroke-width=".95"/></svg><div class="t rt" style="left:425px;top:364.74px;font-size:8.15px;line-height:8.15px;color:#4b5563;font-weight:normal;letter-spacing:-0.08px">Management / Research &amp; Development / R&amp;D USA / Lo...</div>
<div class="t rt" style="left:639px;top:364.74px;font-size:8.15px;line-height:8.15px;color:#4b5563;font-weight:normal;">Experienced Devel...</div>
<svg class="a" style="left:719.3px;top:361.70px" width="13.6" height="13.2" viewBox="0 0 14 14" preserveAspectRatio="none"><clipPath id="c12"><rect width="14" height="14" rx="2.3"/></clipPath><g clip-path="url(#c12)"><rect width="14" height="14" fill="#6d57c2"/><path d="M0 0H14L0 14Z" fill="#7b66cc"/><path d="M2.4 6 Q2.4 1.4 7 1.5 Q11.2 1.4 11.2 6.4 Q11 12.8 7 12.9 Q3 12.8 2.4 6Z" fill="#c68c66"/><path d="M2.6 5.2 Q3 1.4 7 1.5 Q10.8 1.4 11 5 Q9.5 3.2 7 3.4 Q4.2 3.2 2.6 5.2Z" fill="#6e4632"/><path d="M3.4 8.6 Q4 12.8 7 12.9 Q10 12.8 10.6 8.6 Q8.5 10.6 7 10.4 Q5.5 10.6 3.4 8.6Z" fill="#9a6444"/></g></svg><div class="t rt" style="left:735.2px;top:365.44px;font-size:8.15px;line-height:8.15px;color:#4b5563;font-weight:normal;">Marc Demo</div>
<div class="a" style="left:130.9px;top:386.45px;width:7.9px;height:7.9px;border:1px solid #e6e8eb;border-radius:1.6px;background:#fff"></div><div class="t rt" style="left:147px;top:387.72px;font-size:8.15px;line-height:8.15px;color:#4b5563;font-weight:normal;">Rachel Pe...</div>
<div class="t rt" style="left:197.1px;top:387.72px;font-size:8.15px;line-height:8.15px;color:#4b5563;font-weight:normal;letter-spacing:0.3px">(555)-26...</div>
<div class="t rt" style="left:246.8px;top:387.72px;font-size:8.15px;line-height:8.15px;color:#4b5563;font-weight:normal;">jod@odoo.com</div>
<svg class="a" style="left:328px;top:386.85px" width="9.2" height="9.2" viewBox="0 0 9.2 9.2"><circle cx="4.6" cy="4.6" r="4" fill="none" stroke="#5f6670" stroke-width="1.2"/><path d="M5.1 2.7V5.1 L3.7 5.8" fill="none" stroke="#5f6670" stroke-width=".95"/></svg><div class="t rt" style="left:425px;top:387.72px;font-size:8.15px;line-height:8.15px;color:#4b5563;font-weight:normal;">Management / Sales</div>
<div class="t rt" style="left:639px;top:387.72px;font-size:8.15px;line-height:8.15px;color:#4b5563;font-weight:normal;">Marketing and Co...</div>
<svg class="a" style="left:719.3px;top:384.65px" width="13.6" height="13.2" viewBox="0 0 14 14" preserveAspectRatio="none"><clipPath id="c13"><rect width="14" height="14" rx="2.3"/></clipPath><g clip-path="url(#c13)"><rect width="14" height="14" fill="#463c33"/><rect x="0" y="0" width="4" height="14" fill="#6d5f52"/><rect x="11" y="0" width="3" height="14" fill="#1f1b17"/><ellipse cx="7.2" cy="6.6" rx="3.3" ry="3.6" fill="#8a5a3a"/><path d="M3.6 4.6 Q3.6 .6 7.2 .7 Q10.8 .6 10.8 4.4 Q9 2.8 7 3 Q5 2.8 3.6 4.6Z" fill="#15110e"/><path d="M.8 14 Q1.5 9.6 7 9.7 Q11.6 9.6 11.8 14Z" fill="#eeeeea"/></g></svg><div class="t rt" style="left:735.2px;top:388.42px;font-size:8.15px;line-height:8.15px;color:#4b5563;font-weight:normal;">Jeffrey Kelly</div>
<div class="a" style="left:130.9px;top:409.40px;width:7.9px;height:7.9px;border:1px solid #e6e8eb;border-radius:1.6px;background:#fff"></div><div class="t rt" style="left:147px;top:410.70px;font-size:8.15px;line-height:8.15px;color:#4b5563;font-weight:normal;">Randall Le...</div>
<div class="t rt" style="left:197.1px;top:410.70px;font-size:8.15px;line-height:8.15px;color:#4b5563;font-weight:normal;letter-spacing:0.3px">(555)-77...</div>
<div class="t rt" style="left:246.8px;top:410.70px;font-size:8.15px;line-height:8.15px;color:#4b5563;font-weight:normal;">randall.lewis74@e...</div>
<svg class="a" style="left:328px;top:409.80px" width="9.2" height="9.2" viewBox="0 0 9.2 9.2"><circle cx="4.6" cy="4.6" r="4" fill="none" stroke="#5f6670" stroke-width="1.2"/><path d="M5.1 2.7V5.1 L3.7 5.8" fill="none" stroke="#5f6670" stroke-width=".95"/></svg><div class="t rt" style="left:425px;top:410.70px;font-size:8.15px;line-height:8.15px;color:#4b5563;font-weight:normal;">Management / Research &amp; Development</div>
<div class="t rt" style="left:639px;top:410.70px;font-size:8.15px;line-height:8.15px;color:#4b5563;font-weight:normal;">Experienced Devel...</div>
<svg class="a" style="left:719.3px;top:407.60px" width="13.6" height="13.2" viewBox="0 0 14 14" preserveAspectRatio="none"><clipPath id="c14"><rect width="14" height="14" rx="2.3"/></clipPath><g clip-path="url(#c14)"><rect width="14" height="14" fill="#6d57c2"/><path d="M0 0H14L0 14Z" fill="#7b66cc"/><path d="M2.4 6 Q2.4 1.4 7 1.5 Q11.2 1.4 11.2 6.4 Q11 12.8 7 12.9 Q3 12.8 2.4 6Z" fill="#c68c66"/><path d="M2.6 5.2 Q3 1.4 7 1.5 Q10.8 1.4 11 5 Q9.5 3.2 7 3.4 Q4.2 3.2 2.6 5.2Z" fill="#6e4632"/><path d="M3.4 8.6 Q4 12.8 7 12.9 Q10 12.8 10.6 8.6 Q8.5 10.6 7 10.4 Q5.5 10.6 3.4 8.6Z" fill="#9a6444"/></g></svg><div class="t rt" style="left:735.2px;top:411.40px;font-size:8.15px;line-height:8.15px;color:#4b5563;font-weight:normal;">Marc Demo</div>
</div></body></html>
